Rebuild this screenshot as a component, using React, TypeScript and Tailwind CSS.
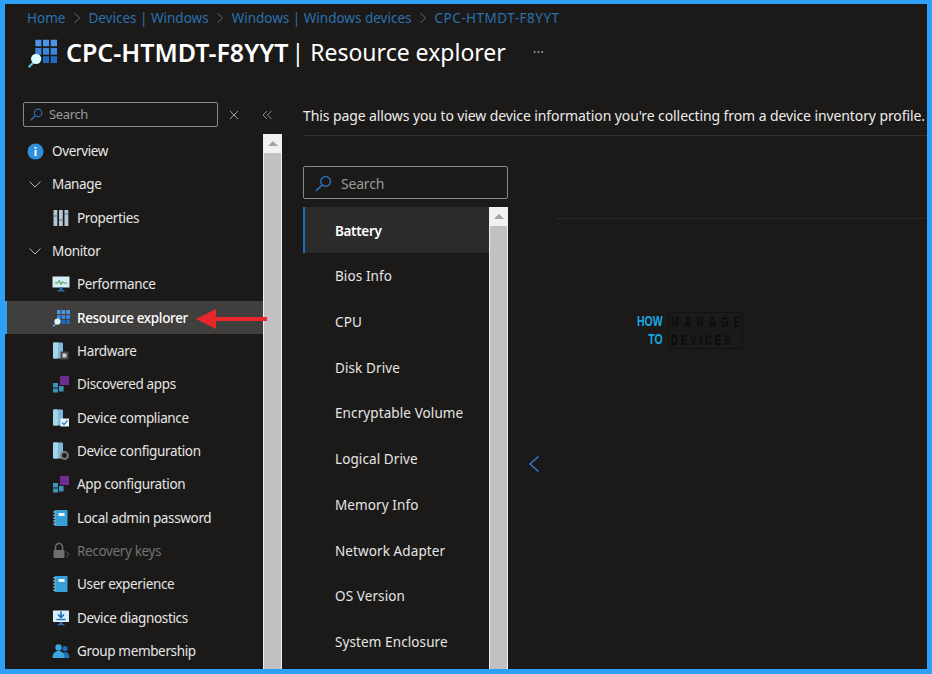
import React from "react";

const font = { fontFamily: '"Noto Sans", "Open Sans", sans-serif' };

const Search = ({ size = 16 }: { size?: number }) => (
  <svg width={size} height={size} viewBox="0 0 16 16" fill="none" stroke="#2f6fb5" strokeWidth="1.3">
    <circle cx="10" cy="6" r="4.6" />
    <path d="M6.6 9.4 1 15" strokeWidth="1.6" />
  </svg>
);

const Chevron = () => (
  <svg width="14" height="14" viewBox="0 0 14 14" fill="none" stroke="#b5b5b5" strokeWidth="1">
    <path d="M1.5 4.5 7 10l5.5-5.5" />
  </svg>
);

const Grid = ({ size = 18 }: { size?: number }) => (
  <svg width={size} height={size} viewBox="0 0 18 18">
    <path d="M5 1h3.6v4H5zM9.6 1h3.6v4H9.6zM14.2 1H18v4h-3.8z" fill="#4c97e8" />
    <path d="M5 6h3.6v4H5zM9.6 6h3.6v4H9.6zM14.2 6H18v4h-3.8z" fill="#3a86dc" />
    <path d="M9.6 11h3.6v4H9.6zM14.2 11H18v4h-3.8z" fill="#1f6cbe" />
    <path d="M1 17.5 4 14.5" stroke="#5fc6d8" strokeWidth="1.3" />
    <circle cx="5.5" cy="12.5" r="3.1" fill="#d7fbff" />
  </svg>
);

const Device = ({ badge }: { badge: "chip" | "check" | "gear" }) => (
  <svg width="18" height="18" viewBox="0 0 18 18">
    <rect x="1" y="0.5" width="10" height="16" rx="1" fill="#7fb8d8" />
    <rect x="1" y="0.5" width="5" height="16" rx="1" fill="#a5d3e8" />
    {badge === "chip" && (
      <g>
        <rect x="8.5" y="9.5" width="8" height="8" fill="#4a4a4a" />
        <rect x="10.5" y="11.5" width="4" height="4" fill="#cfcfcf" />
      </g>
    )}
    {badge === "check" && (
      <g>
        <rect x="8.5" y="9.5" width="8.5" height="8" fill="#e9f3fa" />
        <path d="m10 13.5 2 2 3.5-4" fill="none" stroke="#2f7fc4" strokeWidth="1.2" />
      </g>
    )}
    {badge === "gear" && (
      <circle cx="12.5" cy="13.5" r="3.4" fill="#1b1a19" stroke="#7d7d7d" strokeWidth="2" />
    )}
  </svg>
);

const Apps = () => (
  <svg width="18" height="18" viewBox="0 0 18 18">
    <rect x="8" y="1" width="9" height="9" fill="#6f2c91" />
    <rect x="1" y="8" width="5" height="4.5" fill="#3b93b8" />
    <rect x="7" y="11" width="4.6" height="5.5" fill="#3b93b8" />
    <rect x="1" y="13.5" width="5" height="4" fill="#3b93b8" />
  </svg>
);

const Notebook = () => (
  <svg width="18" height="18" viewBox="0 0 18 18">
    <rect x="2.5" y="1" width="13" height="16" rx="0.5" fill="#38a0d4" />
    <rect x="6.5" y="4" width="6" height="3" fill="#e8f6fc" />
    <path d="M1 3h3M1 6h3M1 9h3M1 12h3M1 15h3" stroke="#9fc6d8" strokeWidth="1" />
  </svg>
);

const Properties = () => (
  <svg width="18" height="18" viewBox="0 0 18 18">
    <rect x="1.5" y="1" width="3.8" height="16" fill="#b4c8d2" />
    <rect x="7" y="1" width="3.8" height="16" fill="#b4c8d2" />
    <rect x="12.5" y="1" width="3.8" height="16" fill="#b4c8d2" />
    <path d="M1.5 7h3.8M7 11h3.8M12.5 5h3.8" stroke="#4a6a7a" strokeWidth="1.2" />
  </svg>
);

const Monitor = () => (
  <svg width="18" height="18" viewBox="0 0 18 18">
    <rect x="0.5" y="1.5" width="17" height="11" fill="#d5eef7" />
    <path d="M3 8h3l1.3-2.5L9 9.5l1.5-3 1 1.5H15" fill="none" stroke="#3f9a4a" strokeWidth="1" />
    <path d="M7.5 12.5h3v2.5h-3zM5.5 15h7v1.5h-7z" fill="#2a6cb0" />
  </svg>
);

const Diagnostics = () => (
  <svg width="18" height="18" viewBox="0 0 18 18">
    <rect x="1" y="1.5" width="16" height="11.5" fill="#d8eef8" />
    <path d="M9 2.5v5M6 5.5l3 3 3-3" fill="none" stroke="#1f72c2" strokeWidth="1.6" />
    <path d="M4.5 10.5h9" stroke="#1f72c2" strokeWidth="1.4" />
    <path d="M7.5 13h3v2h-3zM5.5 15h7v1.2h-7z" fill="#2a6cb0" />
  </svg>
);

const Lock = () => (
  <svg width="18" height="18" viewBox="0 0 18 18" fill="none">
    <path d="M3.5 8V5a3.5 3.5 0 0 1 7 0v3" stroke="#6e6e6e" strokeWidth="1.5" />
    <rect x="1.5" y="8" width="11" height="8" rx="1" fill="#6e6e6e" />
    <path d="M14 9.5 17 12.5l-3 3" stroke="#6e6e6e" strokeWidth="0.9" />
  </svg>
);

const Group = () => (
  <svg width="18" height="18" viewBox="0 0 18 18">
    <circle cx="13" cy="6.5" r="2.6" fill="#1f6fb8" />
    <path d="M9 16c0-4 1.5-6 4-6s4.5 2 4.5 6z" fill="#1f6fb8" />
    <circle cx="6.5" cy="5.5" r="3.2" fill="#3ba7e0" />
    <path d="M0.5 16c0-4.5 2.5-7 6-7s6 2.5 6 7z" fill="#3ba7e0" />
  </svg>
);

const Info = () => (
  <svg width="17" height="17" viewBox="0 0 17 17">
    <circle cx="8.5" cy="8.5" r="8" fill="#2e8fdc" />
    <rect x="7.6" y="7" width="1.9" height="6" fill="#fff" />
    <rect x="7.6" y="4" width="1.9" height="1.9" fill="#fff" />
  </svg>
);

type NavItem = {
  label: string;
  icon: React.ReactNode;
  sub?: boolean;
  active?: boolean;
  muted?: boolean;
};

const navItems: NavItem[] = [
  { label: "Overview", icon: <Info /> },
  { label: "Manage", icon: <Chevron /> },
  { label: "Properties", icon: <Properties />, sub: true },
  { label: "Monitor", icon: <Chevron /> },
  { label: "Performance", icon: <Monitor />, sub: true },
  { label: "Resource explorer", icon: <Grid />, sub: true, active: true },
  { label: "Hardware", icon: <Device badge="chip" />, sub: true },
  { label: "Discovered apps", icon: <Apps />, sub: true },
  { label: "Device compliance", icon: <Device badge="check" />, sub: true },
  { label: "Device configuration", icon: <Device badge="gear" />, sub: true },
  { label: "App configuration", icon: <Apps />, sub: true },
  { label: "Local admin password", icon: <Notebook />, sub: true },
  { label: "Recovery keys", icon: <Lock />, sub: true, muted: true },
  { label: "User experience", icon: <Notebook />, sub: true },
  { label: "Device diagnostics", icon: <Diagnostics />, sub: true },
  { label: "Group membership", icon: <Group />, sub: true },
];

const inventory = [
  "Battery",
  "Bios Info",
  "CPU",
  "Disk Drive",
  "Encryptable Volume",
  "Logical Drive",
  "Memory Info",
  "Network Adapter",
  "OS Version",
  "System Enclosure",
];

const Scrollbar = ({ className }: { className: string }) => (
  <div className={"flex flex-col shrink-0 w-[19px] border-x border-[#eeeeee] bg-[#c1c1c1] " + className}>
    <div className="h-[19px] shrink-0 bg-[#f1f1f1] flex items-center justify-center">
      <div className="w-0 h-0 border-x-[5px] border-x-transparent border-b-[5px] border-b-[#a3a3a3]" />
    </div>
  </div>
);

const Sep = () => (
  <svg width="8" height="12" viewBox="0 0 8 12" fill="none" stroke="#6a6a6a" strokeWidth="1">
    <path d="m1.5 1 5 5-5 5" />
  </svg>
);

export default function App() {
  return (
    <div
      style={font}
      className="w-[932px] h-[674px] overflow-hidden border-[5px] border-t-[4px] border-[#2ea1f6] bg-[#1b1a19] text-[#e6e6e6] flex flex-col tracking-[-0.35px]"
    >
      <div className="pl-[22px] pt-[5px] h-[22px] flex items-center gap-[7.5px] text-[13.5px] leading-[18px] shrink-0 text-[#2a71ae] tracking-normal">
        <span>Home</span>
        <Sep />
        <span>Devices | Windows</span>
        <Sep />
        <span>Windows | Windows devices</span>
        <Sep />
        <span className="tracking-[0.5px]">CPC-HTMDT-F8YYT</span>
      </div>

      <div className="pl-[22px] h-[51px] flex items-center shrink-0">
        <div className="w-[32px] h-[32px] mt-[4px]">
          <Grid size={30} />
        </div>
        <h1 className="ml-[8px] text-[23px] leading-[30px] text-white tracking-normal whitespace-nowrap flex">
          <span className="font-semibold text-[25px] -ml-[1px]">CPC-HTMDT-F8YYT</span>
          <span className="-ml-[3px] whitespace-pre"> | Resource explorer</span>
        </h1>
        <span className="ml-[27px] text-[14px] text-[#9a9a9a] tracking-normal">···</span>
      </div>

      <div className="flex flex-1 min-h-0">
        <aside className="w-[277px] shrink-0 flex flex-col relative">
          <div className="flex items-center pl-[18px] pt-[25px] h-[50px] shrink-0">
            <div className="w-[195px] h-[25px] border border-[#8a8886] rounded-[2px] flex items-center pl-[6px] gap-[6px]">
              <Search size={13} />
              <span className="text-[13px] text-[#9a9a9a]">Search</span>
            </div>
            <span className="ml-[12px] w-[8px]">
              <svg width="8" height="8" viewBox="0 0 8 8" stroke="#b0b0b0" strokeWidth="0.9"><path d="m0 0 8 8M8 0 0 8" /></svg>
            </span>
            <span className="ml-[24px]">
              <svg width="10" height="10" viewBox="0 0 10 10" fill="none" stroke="#9a9a9a" strokeWidth="0.9"><path d="M5 1 1 5l4 4M9.5 1l-4 4 4 4" /></svg>
            </span>
          </div>

          <div className="flex flex-1 min-h-0 mt-[7px]">
            <nav className="w-[258px] shrink-0 pt-[0.5px]">
              {navItems.map((item) => (
                <div
                  key={item.label}
                  className={
                    "h-[33.33px] flex items-center border-l-[2px] " +
                    (item.active ? "border-[#2ea1f6] bg-[#403f3e] " : "border-transparent ") +
                    (item.sub ? "pl-[45px]" : "pl-[19px]")
                  }
                >
                  <span className="w-[18px] flex justify-center shrink-0">{item.icon}</span>
                  <span
                    className={
                      (item.sub ? "ml-[7px] " : "ml-[8px] ") +
                      "text-[13.5px] leading-[18px] whitespace-nowrap " +
                      (item.active ? "font-medium text-white " : "") +
                      (item.muted ? "text-[#737373]" : "")
                    }
                  >
                    {item.label}
                  </span>
                </div>
              ))}
            </nav>
            <Scrollbar className="h-[540px]" />
          </div>

          {/* annotation arrow */}
          <svg className="absolute left-[191px] top-[231px]" width="71" height="22" viewBox="0 0 71 22">
            <path d="M0 11 20 1v8h51v4H20v8z" fill="#e8262a" />
          </svg>
        </aside>

        <main className="flex-1 min-w-0 pl-[21px] flex flex-col">
          <div className="h-[59px] pt-[30px] flex items-start shrink-0 border-b border-[#2f2f2f]">
            <p className="text-[14px] leading-[18px] whitespace-nowrap text-[#ececec] tracking-[-0.1px]">
              This page allows you to view device information you're collecting from a device inventory profile.
            </p>
          </div>

          <div className="flex pt-[30px]">
            <div className="w-[205px] shrink-0">
              <div className="h-[33px] pt-[1px] border border-[#8a8886] rounded-[2px] flex items-center pl-[11px] gap-[9px]">
                <Search size={17} />
                <span className="text-[14px] text-[#9a9a9a] tracking-[-0.2px]">Search</span>
              </div>
              <div className="flex mt-[8px]">
                <ul className="w-[186px] shrink-0">
                  {inventory.map((name, i) => (
                    <li
                      key={name}
                      className={
                        "h-[45.7px] pt-[2px] flex items-center pl-[30px] border-l-[2px] text-[13.5px] whitespace-nowrap " +
                        (i === 0
                          ? "border-[#1f6cbe] bg-[#2b2b2b] font-semibold text-white"
                          : "border-transparent tracking-[0.1px]")
                      }
                    >
                      {name}
                    </li>
                  ))}
                </ul>
                <Scrollbar className="h-[520px]" />
              </div>
            </div>

            <div className="flex-1 min-w-0 pl-[48px] relative">
              <div className="mt-[52px] border-t border-[#2a2a2a]" />
              {/* watermark */}
              <div
                className="absolute left-[129px] top-[146px] flex gap-[5px] leading-[18px] font-bold text-[15px]"
                style={{ fontFamily: '"Liberation Sans", sans-serif' }}
              >
                <div className="w-[26px] h-[36px] flex flex-col items-end text-[#19a7e0] tracking-normal">
                  <span className="scale-x-[0.7] origin-right">HOW</span>
                  <span className="scale-x-[0.7] origin-right">TO</span>
                </div>
                <div className="w-[75px] h-[37px] pl-[2px] border border-[#111111] rounded-[3px] text-[#0c0c0c] whitespace-nowrap">
                  <div className="scale-x-[0.65] origin-left tracking-[8px]">MANAGE</div>
                  <div className="scale-x-[0.65] origin-left tracking-[4.3px]">DEVICES</div>
                </div>
              </div>
              <svg className="absolute left-[20px] top-[289px]" width="12" height="18" viewBox="0 0 12 18" fill="none" stroke="#2b7cd3" strokeWidth="1.5">
                <path d="M10.5 1.5 2 9l8.5 7.5" />
              </svg>
            </div>
          </div>
        </main>
      </div>
    </div>
  );
}
